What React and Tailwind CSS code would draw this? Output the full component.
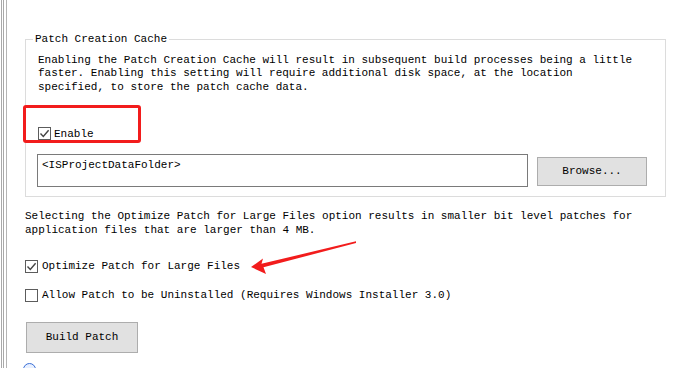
import React from 'react';

const CheckBox = ({ checked }) => (
    <div className="w-[13px] h-[13px] shrink-0 border border-[#5c5c5c] bg-white flex items-center justify-center">
        {checked && (
            <svg width="11" height="11" viewBox="0 0 11 11">
                <path d="M1.5 5.5 L4.3 8.4 L9.6 2.2" fill="none" stroke="#444" strokeWidth="1.4" />
            </svg>
        )}
    </div>
);

const App = () => {
    return (
        <div className="relative w-[680px] h-[368px] bg-white flex overflow-hidden text-[11px] leading-[13.5px] text-black font-['Liberation_Mono',monospace]">
            {/* left window edge */}
            <div className="flex h-full shrink-0">
                <div className="w-px ml-[1px] bg-[#a9a9a9]" />
                <div className="w-px ml-[1px] bg-[#a9a9a9]" />
                <div className="w-px ml-[2px] bg-[#b4b4b4]" />
            </div>

            <div className="flex-1 pl-[18px] pt-[33px]">
                {/* Patch Creation Cache group */}
                <fieldset className="w-[641px] border border-[#dcdcdc]">
                    <legend className="ml-[7px] px-[2px]">Patch Creation Cache</legend>
                    <div className="pl-[12px] pb-[9px]">
                        <p className="mt-[7px] whitespace-pre">
                            Enabling the Patch Creation Cache will result in subsequent build processes being a little
                            <br />
                            faster. Enabling this setting will require additional disk space, at the location
                            <br />
                            specified, to store the patch cache data.
                        </p>

                        <div className="relative mt-[33px] flex items-center gap-[3px] h-[13px]">
                            <div className="absolute -left-[15px] -top-[22px] w-[118px] h-[38px] border-[3px] border-[#f21c1c] rounded-[3px]" />
                            <CheckBox checked />
                            <span className="mt-[2px]">Enable</span>
                        </div>

                        <div className="flex items-start mt-[14px] -ml-[1px]">
                            <div className="w-[491px] h-[33px] border border-[#7a7a7a] pl-[4px] pt-[4px]">
                                &lt;ISProjectDataFolder&gt;
                            </div>
                            <button className="ml-[9px] mt-[3px] w-[110px] h-[29px] bg-[#e1e1e1] border border-[#adadad] flex items-center justify-center">
                                Browse...
                            </button>
                        </div>
                    </div>
                </fieldset>

                {/* Large files option */}
                <p className="mt-[13px] whitespace-pre">
                    Selecting the Optimize Patch for Large Files option results in smaller bit level patches for
                    <br />
                    application files that are larger than 4 MB.
                </p>

                <div className="mt-[23px] flex items-center gap-[4px] h-[13px]">
                    <CheckBox checked />
                    <span className="mt-[1px]">Optimize Patch for Large Files</span>
                </div>

                <div className="mt-[16px] flex items-center gap-[4px] h-[13px]">
                    <CheckBox />
                    <span className="mt-[1px]">Allow Patch to be Uninstalled (Requires Windows Installer 3.0)</span>
                </div>

                <button className="mt-[20px] ml-[1px] w-[112px] h-[31px] bg-[#e1e1e1] border border-[#adadad] flex items-center justify-center">
                    Build Patch
                </button>

                <div className="mt-[10px] -ml-[2px] w-[13px] h-[13px] rounded-full border border-[#3b6fd6] bg-[#e8f0ff]" />
            </div>

            {/* annotation arrow */}
            <svg className="absolute inset-0 pointer-events-none" width="680" height="368" viewBox="0 0 680 368">
                <polygon
                    points="251,267 263,258.5 261.5,263.8 356,241.3 356,243 263.5,267.3 266,274"
                    fill="#f21c1c"
                />
            </svg>
        </div>
    );
};

export default App;
